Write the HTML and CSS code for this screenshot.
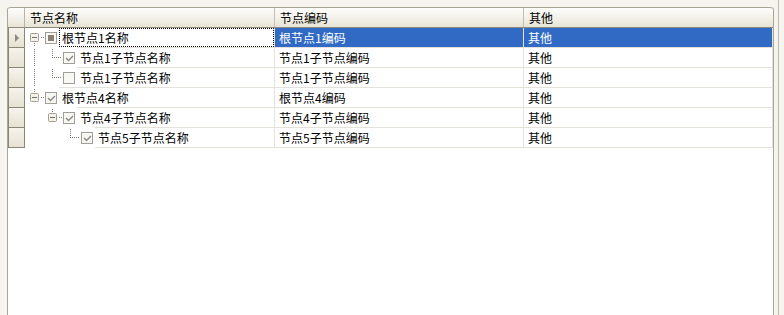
FILE: index.html
```html
<!DOCTYPE html>
<html lang="zh">
<head>
<meta charset="utf-8">
<title>TreeList</title>
<link rel="stylesheet" href="styles.css">
</head>
<body>
<div class="wrap">
<div class="grid">
  <div class="hdr">
    <div class="hcorner"></div>
    <div class="hc c1">节点名称</div>
    <div class="hc c2">节点编码</div>
    <div class="hc c3">其他</div>
  </div>

  <div class="row sel">
    <div class="rh"><span class="arrow"></span></div>
    <div class="cell c1">
      <svg class="tree" width="34" height="19" viewBox="0 0 34 19">
        <g class="dots">
          <rect x="9" y="15" width="1" height="1"/><rect x="9" y="17" width="1" height="1"/>
          <rect x="16" y="9" width="1" height="1"/><rect x="18" y="9" width="1" height="1"/>
        </g>
        <rect class="exp" x="5.5" y="5.5" width="8" height="8" rx="1"/>
        <rect class="minus" x="7" y="9" width="5" height="1"/>
        <rect class="cb" x="20.5" y="4.5" width="11" height="11"/>
        <rect class="ind" x="23" y="7" width="6" height="6"/>
      </svg>
      <span class="txt focus">根节点1名称</span>
    </div>
    <div class="cell c2">根节点1编码</div>
    <div class="cell c3">其他</div>
  </div>

  <div class="row">
    <div class="rh"></div>
    <div class="cell c1">
      <svg class="tree" width="52" height="19" viewBox="0 0 52 19">
        <g class="dots">
          <rect x="9" y="1" width="1" height="1"/><rect x="9" y="3" width="1" height="1"/><rect x="9" y="5" width="1" height="1"/><rect x="9" y="7" width="1" height="1"/><rect x="9" y="9" width="1" height="1"/><rect x="9" y="11" width="1" height="1"/><rect x="9" y="13" width="1" height="1"/><rect x="9" y="15" width="1" height="1"/><rect x="9" y="17" width="1" height="1"/>
          <rect x="27" y="1" width="1" height="1"/><rect x="27" y="3" width="1" height="1"/><rect x="27" y="5" width="1" height="1"/><rect x="27" y="7" width="1" height="1"/><rect x="27" y="9" width="1" height="1"/>
          <rect x="29" y="9" width="1" height="1"/><rect x="31" y="9" width="1" height="1"/><rect x="33" y="9" width="1" height="1"/><rect x="35" y="9" width="1" height="1"/>
        </g>
        <rect class="cb" x="38.5" y="4.5" width="11" height="11"/>
        <path class="chk" d="M41 10 L43.5 12.5 L48 8"/>
      </svg>
      <span class="txt">节点1子节点名称</span>
    </div>
    <div class="cell c2">节点1子节点编码</div>
    <div class="cell c3">其他</div>
  </div>

  <div class="row">
    <div class="rh"></div>
    <div class="cell c1">
      <svg class="tree" width="52" height="19" viewBox="0 0 52 19">
        <g class="dots">
          <rect x="9" y="1" width="1" height="1"/><rect x="9" y="3" width="1" height="1"/><rect x="9" y="5" width="1" height="1"/><rect x="9" y="7" width="1" height="1"/><rect x="9" y="9" width="1" height="1"/><rect x="9" y="11" width="1" height="1"/><rect x="9" y="13" width="1" height="1"/><rect x="9" y="15" width="1" height="1"/><rect x="9" y="17" width="1" height="1"/>
          <rect x="27" y="1" width="1" height="1"/><rect x="27" y="3" width="1" height="1"/><rect x="27" y="5" width="1" height="1"/><rect x="27" y="7" width="1" height="1"/><rect x="27" y="9" width="1" height="1"/>
          <rect x="29" y="9" width="1" height="1"/><rect x="31" y="9" width="1" height="1"/><rect x="33" y="9" width="1" height="1"/><rect x="35" y="9" width="1" height="1"/>
        </g>
        <rect class="cb" x="38.5" y="4.5" width="11" height="11"/>
      </svg>
      <span class="txt">节点1子节点名称</span>
    </div>
    <div class="cell c2">节点1子节点编码</div>
    <div class="cell c3">其他</div>
  </div>

  <div class="row">
    <div class="rh"></div>
    <div class="cell c1">
      <svg class="tree" width="34" height="19" viewBox="0 0 34 19">
        <g class="dots">
          <rect x="9" y="1" width="1" height="1"/><rect x="9" y="3" width="1" height="1"/>
          <rect x="16" y="9" width="1" height="1"/><rect x="18" y="9" width="1" height="1"/>
        </g>
        <rect class="exp" x="5.5" y="5.5" width="8" height="8" rx="1"/>
        <rect class="minus" x="7" y="9" width="5" height="1"/>
        <rect class="cb" x="20.5" y="4.5" width="11" height="11"/>
        <path class="chk" d="M23 10 L25.5 12.5 L30 8"/>
      </svg>
      <span class="txt">根节点4名称</span>
    </div>
    <div class="cell c2">根节点4编码</div>
    <div class="cell c3">其他</div>
  </div>

  <div class="row">
    <div class="rh"></div>
    <div class="cell c1">
      <svg class="tree" width="52" height="19" viewBox="0 0 52 19">
        <g class="dots">
          <rect x="27" y="1" width="1" height="1"/><rect x="27" y="3" width="1" height="1"/>
          <rect x="34" y="9" width="1" height="1"/><rect x="36" y="9" width="1" height="1"/>
        </g>
        <rect class="exp" x="23.5" y="5.5" width="8" height="8" rx="1"/>
        <rect class="minus" x="25" y="9" width="5" height="1"/>
        <rect class="cb" x="38.5" y="4.5" width="11" height="11"/>
        <path class="chk" d="M41 10 L43.5 12.5 L48 8"/>
      </svg>
      <span class="txt">节点4子节点名称</span>
    </div>
    <div class="cell c2">节点4子节点编码</div>
    <div class="cell c3">其他</div>
  </div>

  <div class="row last">
    <div class="rh"></div>
    <div class="cell c1">
      <svg class="tree" width="70" height="19" viewBox="0 0 70 19">
        <g class="dots">
          <rect x="45" y="1" width="1" height="1"/><rect x="45" y="3" width="1" height="1"/><rect x="45" y="5" width="1" height="1"/><rect x="45" y="7" width="1" height="1"/><rect x="45" y="9" width="1" height="1"/>
          <rect x="47" y="9" width="1" height="1"/><rect x="49" y="9" width="1" height="1"/><rect x="51" y="9" width="1" height="1"/><rect x="53" y="9" width="1" height="1"/>
        </g>
        <rect class="cb" x="56.5" y="4.5" width="11" height="11"/>
        <path class="chk" d="M59 10 L61.5 12.5 L66 8"/>
      </svg>
      <span class="txt">节点5子节点名称</span>
    </div>
    <div class="cell c2">节点5子节点编码</div>
    <div class="cell c3">其他</div>
  </div>
</div>
<div class="edge"></div>
</div>
</body>
</html>
```
FILE: styles.css
```css
html, body {
  margin: 0;
  padding: 0;
}
body {
  background: #f6f4ee;
  font-family: "Noto Sans CJK SC", "Noto Sans", sans-serif;
  font-size: 12px;
  color: #000;
  width: 784px;
  height: 315px;
  overflow: hidden;
}
.wrap {
  display: flex;
  height: 315px;
}
.grid {
  margin: 7px 0 0 7px;
  width: 767px;
  height: 308px;
  box-sizing: border-box;
  background: #fff;
  border-left: 1px solid #a9a699;
  border-right: 1px solid #a9a699;
  border-radius: 3px 3px 0 0;
}
.edge {
  margin-left: 4px;
  width: 1px;
  height: 315px;
  background: #bcb9ad;
}
.hdr {
  display: flex;
  height: 21px;
  box-sizing: border-box;
  border-top: 1px solid #a9a596;
  border-bottom: 1px solid #8e8a79;
  border-radius: 3px 3px 0 0;
  background: linear-gradient(#fdfdfb, #f3f1ea 50%, #e7e3d5);
}
.hcorner {
  width: 17px;
  box-sizing: border-box;
  border-right: 1px solid #b9b5a6;
}
.hc {
  box-sizing: border-box;
  line-height: 19px;
  padding-left: 5px;
  border-right: 1px solid #c3bfb0;
  white-space: nowrap;
}
.hc.c3 { border-right: 0; }
.c1 { width: 250px; }
.c2 { width: 249px; }
.c3 { width: 249px; }

.row {
  display: flex;
  height: 20px;
}
.rh {
  width: 17px;
  height: 20px;
  box-sizing: border-box;
  border: 1px solid #8a8675;
  border-top: 0;
  background: linear-gradient(#f5f3ec, #e6e2d2);
  display: flex;
  align-items: center;
}
.arrow {
  margin-left: 6px;
  width: 0;
  height: 0;
  border-left: 4px solid #8b887d;
  border-top: 4px solid transparent;
  border-bottom: 4px solid transparent;
}
.cell {
  height: 20px;
  box-sizing: border-box;
  border-right: 1px solid #e4e2db;
  border-bottom: 1px solid #e4e2db;
  padding-left: 4px;
  line-height: 19px;
  white-space: nowrap;
  overflow: hidden;
}
.cell.c1 {
  display: flex;
  align-items: flex-start;
  padding-left: 0;
  border-bottom: 0;
  overflow: visible;
}
.tree {
  display: block;
  flex: none;
  shape-rendering: crispEdges;
}
.dots rect { fill: #7d7b72; }
.exp {
  fill: #f3f1ea;
  stroke: #a29e90;
  stroke-width: 1;
  shape-rendering: auto;
}
.minus { fill: #6f6d66; }
.cb {
  fill: #f7f7f4;
  stroke: #a19e97;
  stroke-width: 1;
}
.ind { fill: #8a8073; }
.chk {
  fill: none;
  stroke: #8d8b86;
  stroke-width: 1.5;
  shape-rendering: auto;
}
.txt {
  flex: 1;
  height: 19px;
  box-sizing: border-box;
  border: 1px solid transparent;
  padding-left: 2px;
  line-height: 17px;
  box-shadow: 0 -1px 0 #e4e2db;
}
.txt.focus {
  border: 1px dotted #000;
  box-shadow: none;
}
.row.last .txt {
  box-shadow: 0 -1px 0 #e4e2db, 0 1px 0 #e4e2db;
}
.sel .c2, .sel .c3 {
  background: #316ac5;
  color: #fff;
}
```
